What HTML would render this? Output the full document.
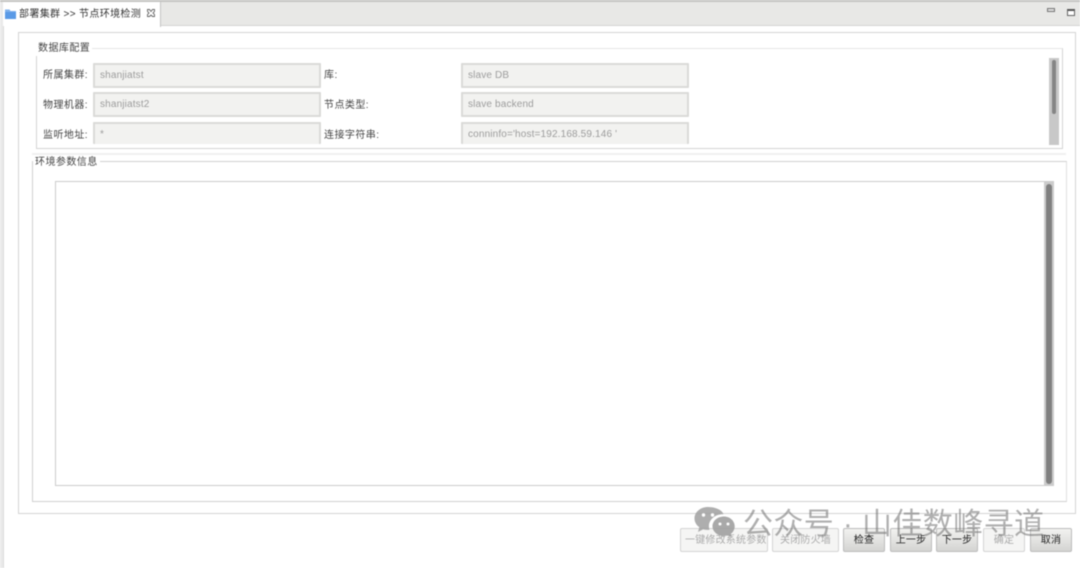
<!DOCTYPE html>
<html>
<head>
<meta charset="utf-8">
<style>
html,body{margin:0;padding:0;background:#fff}
#p{position:relative;width:1080px;height:568px;overflow:hidden;background:#fff;font-family:"Liberation Sans","Noto Sans CJK SC",sans-serif;filter:blur(.5px)}
#p div{position:absolute;box-sizing:border-box;white-space:nowrap}
.lb{font-size:10px;line-height:14px;color:#444;letter-spacing:.45px}
.in{background:#f2f2f0;border:2px solid #dadad8;font-size:10px;color:#9c9c9c;padding-left:5px;line-height:21px;letter-spacing:.15px;border-radius:1px}
.box{border:1px solid #d4d4d4}
.leg{background:#fff;font-size:10px;line-height:14px;color:#444;padding:0 2px;letter-spacing:.45px}
.btn{top:528px;height:24px;border:1px solid #cacaca;border-radius:2px;font-size:10px;line-height:24px;text-align:center;overflow:hidden;letter-spacing:.2px}
.on{background:linear-gradient(#f2f2f0,#d4d4d2);color:#222;border-color:#bcbcbc}
.off{background:#f5f5f4;color:#aaa;border-color:#d4d4d4}
</style>
</head>
<body>
<div id="p">
<div style="left:0;top:0;width:1080px;height:2px;background:#c4c4c2"></div>
<div style="left:160px;top:2px;width:920px;height:24px;background:#e8e8e6;border-bottom:1px solid #d4d4d2"></div>
<div style="left:0;top:2px;width:3px;height:566px;background:#eaeaea"></div>
<div style="left:3px;top:26px;width:1px;height:542px;background:#dcdcdc"></div>
<div style="left:160px;top:1px;width:1px;height:26px;background:#c4c4c4"></div>

<svg style="position:absolute;left:5px;top:8px" width="12" height="12" viewBox="0 0 12 12"><path d="M0 1.500h4.500l1 1.500H11v8H0z" fill="#7eb0ec"/><path d="M0 4h11v7H0z" fill="#5a9ae6"/></svg>
<div style="left:19px;top:8px;font-size:10px;line-height:14px;color:#333;letter-spacing:.35px">部署集群 &gt;&gt; 节点环境检测</div>
<svg style="position:absolute;left:147px;top:9px" width="8" height="8" viewBox="0 0 8 8"><path d="M.5.5h2l1.500 2 1.500-2h2v2L6 4l1.500 1.500v2h-2L4 6 2.500 7.500h-2v-2L2 4 .5 2.500z" fill="none" stroke="#666" stroke-width=".9"/></svg>

<div style="left:1047px;top:8px;width:8px;height:4px;border:1px solid #777;background:#ddd"></div>
<div style="left:1067px;top:9px;width:8px;height:7px;border:1px solid #666;border-top:2px solid #555;background:#fff"></div>

<div class="box" style="left:18px;top:32px;width:1058px;height:482px"></div>

<div class="box" style="left:36px;top:48px;width:1027px;height:101px;border-top-color:#e6e6e6"></div>
<div class="leg" style="left:36px;top:42px">数据库配置</div>

<div class="lb" style="left:43px;top:69px">所属集群:</div>
<div class="in" style="left:93px;top:63px;width:228px;height:25px">shanjiatst</div>
<div class="lb" style="left:43px;top:99px">物理机器:</div>
<div class="in" style="left:93px;top:92px;width:228px;height:25px">shanjiatst2</div>
<div class="lb" style="left:43px;top:129px">监听地址:</div>
<div class="in" style="left:93px;top:122px;width:228px;height:22px;border-bottom:0">*</div>

<div class="lb" style="left:324px;top:69px">库:</div>
<div class="in" style="left:461px;top:63px;width:228px;height:25px">slave DB</div>
<div class="lb" style="left:324px;top:99px">节点类型:</div>
<div class="in" style="left:461px;top:92px;width:228px;height:25px">slave backend</div>
<div class="lb" style="left:324px;top:129px">连接字符串:</div>
<div class="in" style="left:461px;top:122px;width:228px;height:22px;border-bottom:0">conninfo='host=192.168.59.146 '</div>

<div style="left:1049px;top:58px;width:10px;height:87px;background:#c8c8c8"></div>
<div style="left:1052px;top:60px;width:4px;height:54px;background:#858585;border-radius:2px"></div>

<div style="left:32px;top:153px;width:1034px;height:2px;background:#f0f0f0"></div>

<div class="box" style="left:32px;top:161px;width:1035px;height:341px;border-color:#d0d0d0;border-right-color:#e0e0e0"></div>
<div class="leg" style="left:33px;top:155px;padding-top:1px">环境参数信息</div>

<div class="box" style="left:55px;top:181px;width:999px;height:305px;border-color:#cccccc"></div>
<div style="left:1044px;top:182px;width:10px;height:303px;background:#cccccc"></div>
<div style="left:1046px;top:184px;width:6px;height:300px;background:#808080;border-radius:3px"></div>

<div class="btn off" style="left:680px;width:88px;text-align:left;padding-left:4px">一键修改系统参数</div>
<div class="btn off" style="left:772px;width:67px">关闭防火墙</div>
<div class="btn on" style="left:843px;width:42px">检查</div>
<div class="btn on" style="left:890px;width:42px">上一步</div>
<div class="btn on" style="left:936px;width:42px">下一步</div>
<div class="btn off" style="left:983px;width:42px">确定</div>
<div class="btn on" style="left:1030px;width:42px">取消</div>

<svg style="position:absolute;left:694px;top:506px" width="41" height="32" viewBox="0 0 41 32"><path d="M14 1C6.500 1 .5 6 .5 12.500c0 3.600 1.900 6.600 4.800 8.700L4 26l5.200-2.800c1.600.5 3.200.7 4.800.7.500 0 1 0 1.500-.1-.4-1.200-.6-2.400-.6-3.600 0-6.800 6.300-12 14-12h.6C28.200 4.200 21.800 1 14 1z" fill="#a0a0a0" opacity=".85"/><path d="M30 10.500c-6.500 0-11.500 4.400-11.500 9.700s5 9.700 11.500 9.700c1.300 0 2.600-.2 3.800-.5l4.200 2.100-1.100-3.700c2.300-1.800 3.800-4.500 3.800-7.600 0-5.300-4.900-9.700-10.700-9.700z" fill="#a0a0a0" opacity=".9"/><circle cx="26" cy="18" r="1.500" fill="#fff"/><circle cx="34" cy="18" r="1.500" fill="#fff"/><circle cx="9.500" cy="9" r="1.700" fill="#fff"/><circle cx="18.500" cy="9" r="1.700" fill="#fff"/></svg>
<div style="left:743px;top:506px;font-size:30px;line-height:38px;color:rgba(110,110,110,.55);letter-spacing:.4px;font-family:'Liberation Sans','Noto Sans CJK SC',sans-serif">公众号 · 山佳数峰寻道</div>
</div>
</body>
</html>
